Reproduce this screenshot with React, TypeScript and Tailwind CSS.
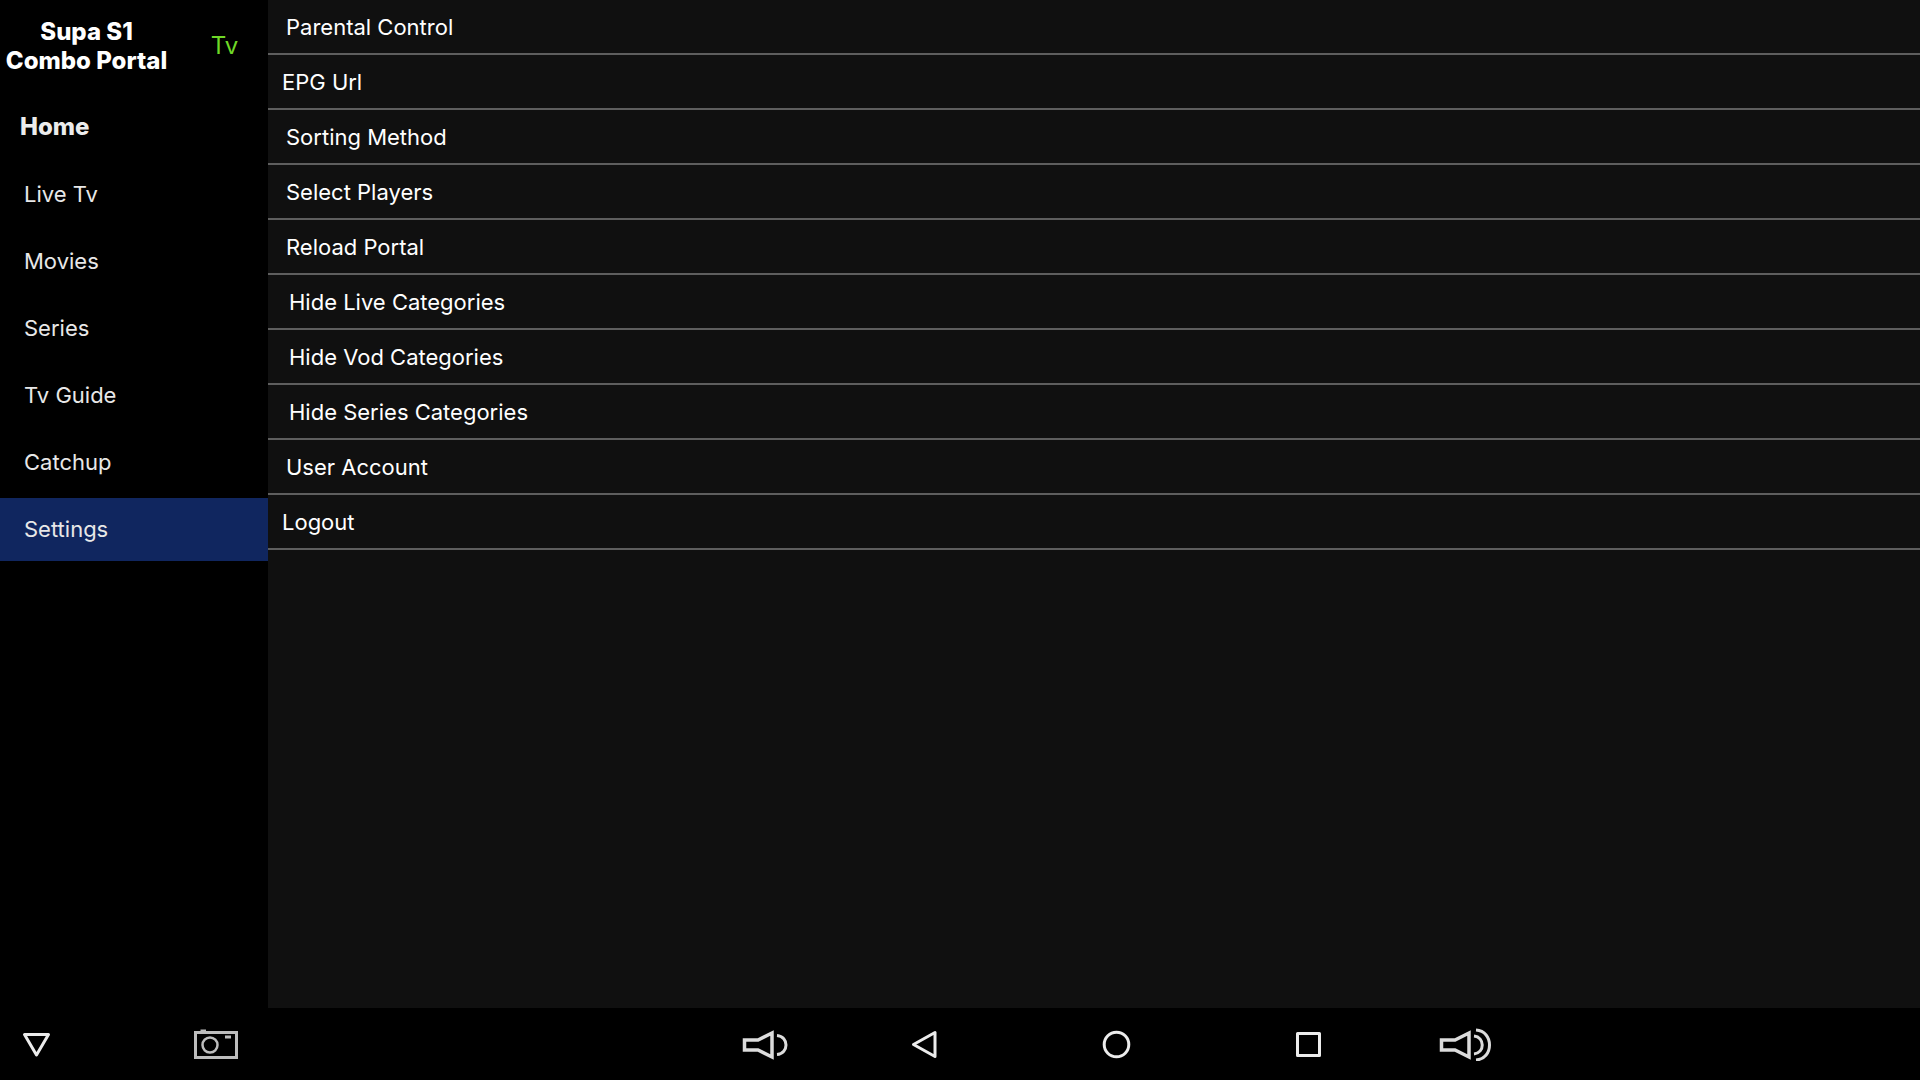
import { useState } from "react";
import type { ReactNode } from "react";

const menu = ["Live Tv", "Movies", "Series", "Tv Guide", "Catchup", "Settings"];

// longer labels sit a little further in
const settings = [
	{ label: "Parental Control", indent: "pl-[18px]" },
	{ label: "EPG Url", indent: "pl-[14px]" },
	{ label: "Sorting Method", indent: "pl-[18px]" },
	{ label: "Select Players", indent: "pl-[18px]" },
	{ label: "Reload Portal", indent: "pl-[18px]" },
	{ label: "Hide Live Categories", indent: "pl-[21px]" },
	{ label: "Hide Vod Categories", indent: "pl-[21px]" },
	{ label: "Hide Series Categories", indent: "pl-[21px]" },
	{ label: "User Account", indent: "pl-[18px]" },
	{ label: "Logout", indent: "pl-[14px]" },
];

function Sidebar() {
	const [active, setActive] = useState<string>("Settings");

	return (
		<aside className="w-[268px] shrink-0 bg-black">
			<header className="flex items-center h-[92px] pl-1">
				<h1 className="w-[165px] text-center text-[24px] leading-[29px] font-extrabold whitespace-nowrap">
					Supa S1
					<br />
					Combo Portal
				</h1>
				<span className="flex-1 pl-3 text-center text-[24px] text-[#6fd827]">
					Tv
				</span>
			</header>
			<h2 className="h-[70px] pl-5 text-[24px] leading-[70px] font-extrabold text-[#ececec]">
				Home
			</h2>
			<nav className="flex flex-col gap-1 pt-px">
				{menu.map((item) => (
					<button
						key={item}
						type="button"
						onClick={() => setActive(item)}
						className={`h-[63px] pl-6 text-left text-[22px] text-[#e8e8e8] cursor-pointer ${
							active === item ? "bg-[#10265f]" : ""
						}`}
					>
						{item}
					</button>
				))}
			</nav>
		</aside>
	);
}

function SettingsList() {
	return (
		<main className="flex-1 bg-[#101010]">
			<ul>
				{settings.map(({ label, indent }) => (
					<li key={label} className="border-b-2 border-[#5e5e5e]">
						<button
							type="button"
							className={`block w-full h-[53px] pt-0.5 text-left text-[22px] cursor-pointer ${indent}`}
						>
							{label}
						</button>
					</li>
				))}
			</ul>
		</main>
	);
}

function BarButton({
	label,
	className,
	children,
}: {
	label: string;
	className: string;
	children: ReactNode;
}) {
	return (
		<button
			type="button"
			aria-label={label}
			className={`flex h-full items-center justify-center cursor-pointer ${className}`}
		>
			{children}
		</button>
	);
}

function SystemBar() {
	return (
		<footer className="flex h-[72px] bg-black text-[#ececec]">
			<div className="flex w-[312px] shrink-0">
				<BarButton label="Hide bar" className="w-[72px]">
					<svg width="30" height="30" viewBox="0 0 30 30" fill="none" stroke="currentColor" strokeWidth="3" strokeLinejoin="round">
						<path d="M3.5 5.5H27.5L15.5 26Z" />
					</svg>
				</BarButton>
				<BarButton label="Screenshot" className="ml-[108px] w-[72px]">
					<svg width="44" height="32" viewBox="0 0 44 32" fill="none" stroke="#bdbdbd">
						<rect x="1.5" y="4.5" width="41" height="25" strokeWidth="3" />
						<path d="M6.5 3h5.5" strokeWidth="3" />
						<circle cx="16" cy="17" r="7.5" strokeWidth="2.5" />
						<path d="M31 9h6" strokeWidth="3" />
					</svg>
				</BarButton>
			</div>
			<div className="flex flex-1 justify-center">
				<BarButton label="Volume down" className="w-[126px]">
					<svg width="46" height="34" viewBox="0 0 46 34" fill="none" stroke="#dcdcdc" strokeWidth="3.5">
						<path d="M2.5 13H16L30 6V30L16 23H2.5Z" />
						<path d="M35 8.5c12 1 12 18 0 19" strokeWidth="3" />
					</svg>
				</BarButton>
				<BarButton label="Back" className="w-[192px]">
					<svg width="30" height="30" viewBox="0 0 30 30" fill="none" stroke="currentColor" strokeWidth="3" strokeLinejoin="round">
						<path d="M26 3.5V27.5L4.5 15.5Z" />
					</svg>
				</BarButton>
				<BarButton label="Home" className="w-[192px]">
					<svg width="30" height="30" viewBox="0 0 30 30" fill="none" stroke="currentColor" strokeWidth="3">
						<circle cx="15.5" cy="15.5" r="12.3" />
					</svg>
				</BarButton>
				<BarButton label="Recent apps" className="w-[192px]">
					<svg width="30" height="30" viewBox="0 0 30 30" fill="none" stroke="currentColor" strokeWidth="3" strokeLinejoin="round">
						<rect x="4.5" y="4.5" width="22" height="22" />
					</svg>
				</BarButton>
				<BarButton label="Volume up" className="w-[126px]">
					<svg width="56" height="34" viewBox="0 0 56 34" fill="none" stroke="#dcdcdc" strokeWidth="3.5">
						<path d="M2.5 13H16L30 6V30L16 23H2.5Z" />
						<path d="M35 9c11 1 11 17 0 18" strokeWidth="3" />
						<path d="M37 3c18 1 18 29 0 30" strokeWidth="3" />
					</svg>
				</BarButton>
			</div>
		</footer>
	);
}

export default function App() {
	return (
		<div className="flex min-h-screen flex-col bg-black text-white font-['Inter','Open_Sans',sans-serif]">
			<div className="flex flex-1">
				<Sidebar />
				<SettingsList />
			</div>
			<SystemBar />
		</div>
	);
}
